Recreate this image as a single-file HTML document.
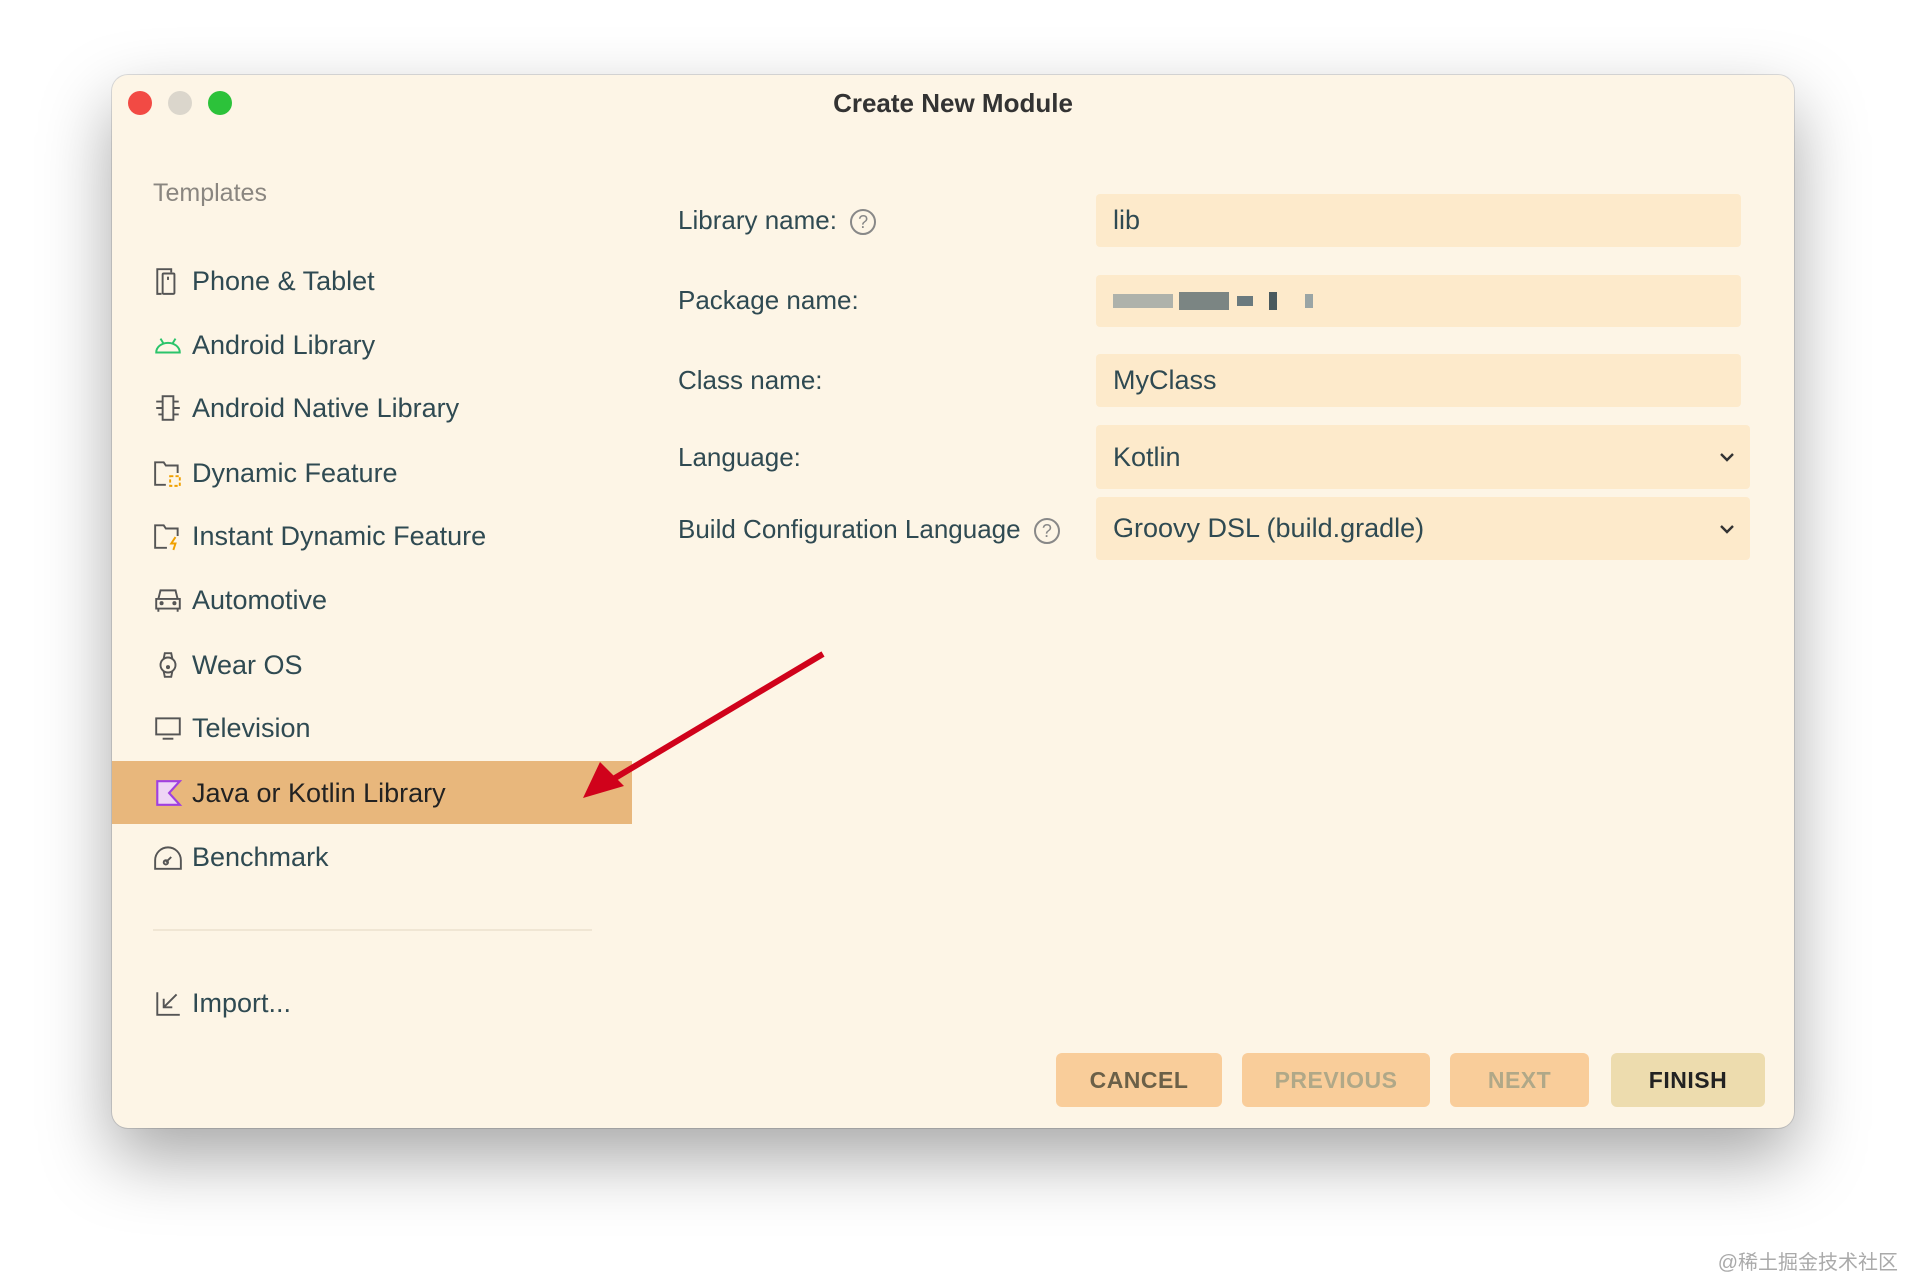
<!DOCTYPE html>
<html><head><meta charset="utf-8"><style>
*{margin:0;padding:0;box-sizing:border-box}
body{width:1906px;height:1276px;background:#fff;position:relative;overflow:hidden;font-family:"Liberation Sans",sans-serif;color:#2f4a52}
.win{position:absolute;left:112px;top:75px;width:1682px;height:1053px;background:#fdf5e6;border-radius:16px;box-shadow:0 30px 70px rgba(0,0,0,.35),0 0 0 1px rgba(0,0,0,.12)}
.dot{position:absolute;top:91px;width:24px;height:24px;border-radius:50%}
.title{position:absolute;top:88px;left:0;width:1906px;text-align:center;font-weight:bold;font-size:26px;color:#333}
.abs{position:absolute}
.tpl{left:153px;top:179px;font-size:25px;color:#8a8680}
.item{position:absolute;left:192px;font-size:27px;line-height:32px}
.ic{position:absolute;left:153px;width:30px;height:30px}
.lbl{position:absolute;left:678px;font-size:26px;line-height:30px}
.inp{position:absolute;left:1096px;width:645px;background:#fdeacb;border-radius:4px;font-size:27px;padding-left:17px;display:flex;align-items:center}
.btn{position:absolute;top:1053px;height:54px;background:#f9cd9a;border-radius:6px;font-weight:bold;font-size:23px;display:flex;align-items:center;justify-content:center;letter-spacing:.5px}
.chev{position:absolute;right:14px;top:50%;margin-top:-8px}
</style></head><body>
<div class="win"></div>
<div class="dot" style="left:128px;background:#f24a44"></div>
<div class="dot" style="left:168px;background:#dbd6cc"></div>
<div class="dot" style="left:208px;background:#2cc23a"></div>
<div class="title">Create New Module</div>
<div class="abs tpl">Templates</div>

<div class="abs" style="left:112px;top:761px;width:520px;height:63px;background:#e8b77c"></div>

<svg class="ic" style="top:266px" viewBox="0 0 28 28" fill="none" stroke="#555" stroke-width="1.8"><path d="M8 26H4V3h13v3"/><rect x="9" y="7" width="11" height="19" rx="1"/><path d="M14 10v3"/></svg>
<div class="item" style="top:265px">Phone &amp; Tablet</div>
<svg class="ic" style="top:330px" viewBox="0 0 28 28" fill="none" stroke="#2bc46b" stroke-width="1.8"><path d="M3 21a11 9 0 0 1 22 0zM7 8l3 5M21 8l-3 5"/></svg>
<div class="item" style="top:329px">Android Library</div>
<svg class="ic" style="top:393px" viewBox="0 0 28 28" fill="none" stroke="#555" stroke-width="1.8"><rect x="9" y="3" width="10" height="22"/><path d="M3 8h6M3 14h6M5 20h4M19 8h5M19 14h6M19 20h5"/></svg>
<div class="item" style="top:392px">Android Native Library</div>
<svg class="ic" style="top:458px" viewBox="0 0 28 28" fill="none" stroke="#555" stroke-width="1.8"><path d="M12 25H2V4h8l2 3h11v7"/><rect x="16" y="17" width="9" height="9" stroke="#f0a000" stroke-dasharray="3 2"/></svg>
<div class="item" style="top:457px">Dynamic Feature</div>
<svg class="ic" style="top:521px" viewBox="0 0 28 28" fill="none" stroke="#555" stroke-width="1.8"><path d="M13 25H2V4h8l2 3h11v7"/><path d="M21 15l-4 6h4l-2 6" stroke="#f0a000"/></svg>
<div class="item" style="top:520px">Instant Dynamic Feature</div>
<svg class="ic" style="top:585px" viewBox="0 0 28 28" fill="none" stroke="#555" stroke-width="1.8"><path d="M5 13l2-8h14l2 8M3 13h22v9H3zM5 22v3M23 22v3"/><circle cx="8" cy="17" r="1"/><circle cx="20" cy="17" r="1"/></svg>
<div class="item" style="top:584px">Automotive</div>
<svg class="ic" style="top:650px" viewBox="0 0 28 28" fill="none" stroke="#555" stroke-width="1.8"><circle cx="14" cy="14" r="7"/><path d="M10 8l1-5h6l1 5M10 20l1 5h6l1-5"/><circle cx="14" cy="16" r="1"/></svg>
<div class="item" style="top:649px">Wear OS</div>
<svg class="ic" style="top:713px" viewBox="0 0 28 28" fill="none" stroke="#555" stroke-width="1.8"><rect x="3" y="5" width="22" height="15"/><path d="M9 24h10"/></svg>
<div class="item" style="top:712px">Television</div>
<svg class="ic" style="top:778px" viewBox="0 0 28 28"><path d="M4 3h21l-10 11 10 11H4z" fill="#eed5f5" stroke="#a040e0" stroke-width="2"/></svg>
<div class="item" style="top:777px;color:#222">Java or Kotlin Library</div>
<svg class="ic" style="top:842px" viewBox="0 0 28 28" fill="none" stroke="#555" stroke-width="1.8"><path d="M2 25v-8a12 12 0 0 1 24 0v8zM12 19l5-5"/><circle cx="12" cy="19" r="2"/></svg>
<div class="item" style="top:841px">Benchmark</div>

<div class="abs" style="left:153px;top:929px;width:439px;height:2px;background:#f0e6d4"></div>
<svg class="ic" style="top:988px" viewBox="0 0 28 28" fill="none" stroke="#555" stroke-width="1.8"><path d="M4 4v21h21M10 18l12-12M10 10v8h8"/></svg>
<div class="item" style="top:987px">Import...</div>

<div class="lbl" style="top:205px">Library name: <span style="display:inline-block;width:26px;height:26px;border:2px solid #888;border-radius:50%;font-size:18px;text-align:center;line-height:22px;color:#888;vertical-align:middle;margin-left:6px">?</span></div>
<div class="lbl" style="top:285px">Package name:</div>
<div class="lbl" style="top:365px">Class name:</div>
<div class="lbl" style="top:442px">Language:</div>
<div class="lbl" style="top:514px">Build Configuration Language <span style="display:inline-block;width:26px;height:26px;border:2px solid #888;border-radius:50%;font-size:18px;text-align:center;line-height:22px;color:#888;vertical-align:middle;margin-left:6px">?</span></div>

<div class="inp" style="top:194px;height:53px">lib</div>
<div class="inp" style="top:275px;height:52px">
<span style="display:inline-block;width:60px;height:14px;background:#8c9a9c;opacity:.7"></span>
<span style="display:inline-block;width:50px;height:18px;background:#5a6b70;margin-left:6px;opacity:.8"></span>
<span style="display:inline-block;width:16px;height:10px;background:#6a7a7e;margin-left:8px"></span>
<span style="display:inline-block;width:8px;height:18px;background:#4a5a5e;margin-left:16px"></span>
<span style="display:inline-block;width:8px;height:14px;background:#9aa5a5;margin-left:28px"></span>
</div>
<div class="inp" style="top:354px;height:53px">MyClass</div>
<div class="inp" style="top:425px;height:64px;width:654px">Kotlin<svg class="chev" width="18" height="16" viewBox="0 0 18 16"><path d="M3 5l6 6 6-6" fill="none" stroke="#333" stroke-width="2.4"/></svg></div>
<div class="inp" style="top:497px;height:63px;width:654px">Groovy DSL (build.gradle)<svg class="chev" width="18" height="16" viewBox="0 0 18 16"><path d="M3 5l6 6 6-6" fill="none" stroke="#333" stroke-width="2.4"/></svg></div>

<svg class="abs" style="left:0;top:0" width="1906" height="1276"><path d="M823 654L610 781" stroke="#d0021b" stroke-width="6"/><path d="M583 798L600 762L624 786z" fill="#d0021b"/></svg>

<div class="btn" style="left:1056px;width:166px;color:#6b6048">CANCEL</div>
<div class="btn" style="left:1242px;width:188px;color:#b0a888">PREVIOUS</div>
<div class="btn" style="left:1450px;width:139px;color:#b0a888">NEXT</div>
<div class="btn" style="left:1611px;width:154px;background:#eddcae;color:#222">FINISH</div>

<div class="abs" style="right:8px;top:1246px;font-size:20px;color:#aaa;font-family:'Liberation Sans','Noto Sans CJK SC',sans-serif">@稀土掘金技术社区</div>
</body></html>
